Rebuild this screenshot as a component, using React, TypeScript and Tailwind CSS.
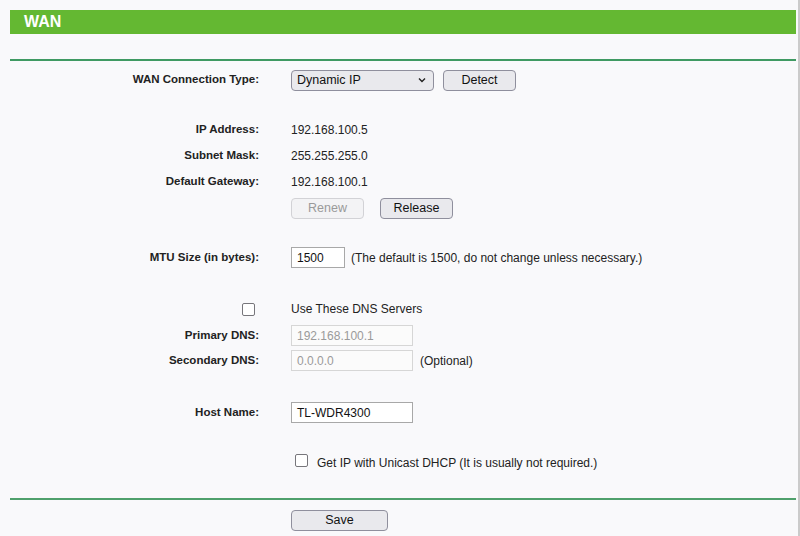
import React from 'react';

const font = { fontFamily: '"Liberation Sans", Arial, sans-serif' };

function Label({ children }: { children: React.ReactNode }) {
  return <div className="w-[249px] shrink-0 text-right font-bold text-[11.5px] text-[#222]">{children}</div>;
}

function Row({ label, children, className = '' }: { label?: React.ReactNode; children?: React.ReactNode; className?: string }) {
  return (
    <div className={`flex items-center gap-[32px] ${className}`}>
      <Label>{label}</Label>
      <div className="flex items-center text-[12px] text-[#222]">{children}</div>
    </div>
  );
}

function Button({ children, width, disabled }: { children: React.ReactNode; width: string; disabled?: boolean }) {
  return (
    <button
      type="button"
      className={`${width} h-[21px] rounded-[4px] border text-[12.5px] leading-none ${
        disabled ? 'border-[#d2d2d6] bg-[#f3f3f5] text-[#9a9a9a]' : 'border-[#8f8f9d] bg-[#e9e9ed] text-[#111]'
      }`}
    >
      {children}
    </button>
  );
}

function TextBox({ value, width, disabled }: { value: string; width: string; disabled?: boolean }) {
  return (
    <div
      className={`${width} h-[21px] flex items-center px-[5px] border text-[12px] ${
        disabled ? 'border-[#d6d6d6] bg-[#fbfbfb] text-[#9a9a9a]' : 'border-[#a8a8a8] bg-white text-[#111]'
      }`}
    >
      {value}
    </div>
  );
}

function CheckBox() {
  return <span className="inline-block w-[13px] h-[13px] rounded-[2px] border-[1.5px] border-[#77767b] bg-white" />;
}

export default function App() {
  return (
    <div className="w-[800px] h-[536px] bg-[#f9f9fb] border-r-2 border-[#cbcbcb] overflow-hidden" style={font}>
      <div className="pt-[10px] pl-[10px] w-[796px]">
        <div className="h-[24px] bg-[#64b832] flex items-center pl-[14px]">
          <span className="text-white font-bold text-[16px] leading-none">WAN</span>
        </div>
        <div className="h-[2px] bg-[#3f9a62] mt-[25px]" />

        <Row label="WAN Connection Type:" className="mt-[8px] h-[22px]">
          <div className="w-[143px] h-[21px] rounded-[4px] border border-[#8f8f9d] bg-[#e9e9ed] flex items-center justify-between pl-[5px] pr-[6px] text-[12.5px] text-[#111]">
            <span>Dynamic IP</span>
            <svg width="10" height="10" viewBox="0 0 10 10" fill="none" stroke="#222" strokeWidth="1.4">
              <path d="M2 3.5l3 3 3-3" />
            </svg>
          </div>
          <div className="ml-[9px]">
            <Button width="w-[73px]">Detect</Button>
          </div>
        </Row>

        <Row label="IP Address:" className="mt-[26px] h-[26px]">192.168.100.5</Row>
        <Row label="Subnet Mask:" className="h-[26px]">255.255.255.0</Row>
        <Row label="Default Gateway:" className="h-[26px]">192.168.100.1</Row>
        <Row className="mt-[3px] h-[21px]">
          <Button width="w-[73px]" disabled>Renew</Button>
          <div className="ml-[16px]">
            <Button width="w-[73px]">Release</Button>
          </div>
        </Row>

        <Row label="MTU Size (in bytes):" className="mt-[28px] h-[21px]">
          <TextBox value="1500" width="w-[54px]" />
          <span className="ml-[6px]">(The default is 1500, do not change unless necessary.)</span>
        </Row>

        <div className="flex items-center mt-[31px] h-[20px] text-[12px] text-[#222]">
          <div className="w-[249px] shrink-0 flex justify-end pr-[4px]">
            <CheckBox />
          </div>
          <span className="ml-[32px]">Use These DNS Servers</span>
        </div>
        <Row label="Primary DNS:" className="mt-[6px] h-[21px]">
          <TextBox value="192.168.100.1" width="w-[122px]" disabled />
        </Row>
        <Row label="Secondary DNS:" className="mt-[4px] h-[21px]">
          <TextBox value="0.0.0.0" width="w-[122px]" disabled />
          <span className="ml-[7px]">(Optional)</span>
        </Row>

        <Row label="Host Name:" className="mt-[31px] h-[21px]">
          <TextBox value="TL-WDR4300" width="w-[122px]" />
        </Row>

        <Row className="mt-[30px] h-[20px]">
          <span className="ml-[4px]"><CheckBox /></span>
          <span className="ml-[9px]">Get IP with Unicast DHCP (It is usually not required.)</span>
        </Row>

        <div className="h-[2px] bg-[#4fa06c] mt-[25px]" />
        <Row className="mt-[10px] h-[21px]">
          <Button width="w-[97px]">Save</Button>
        </Row>
      </div>
    </div>
  );
}
